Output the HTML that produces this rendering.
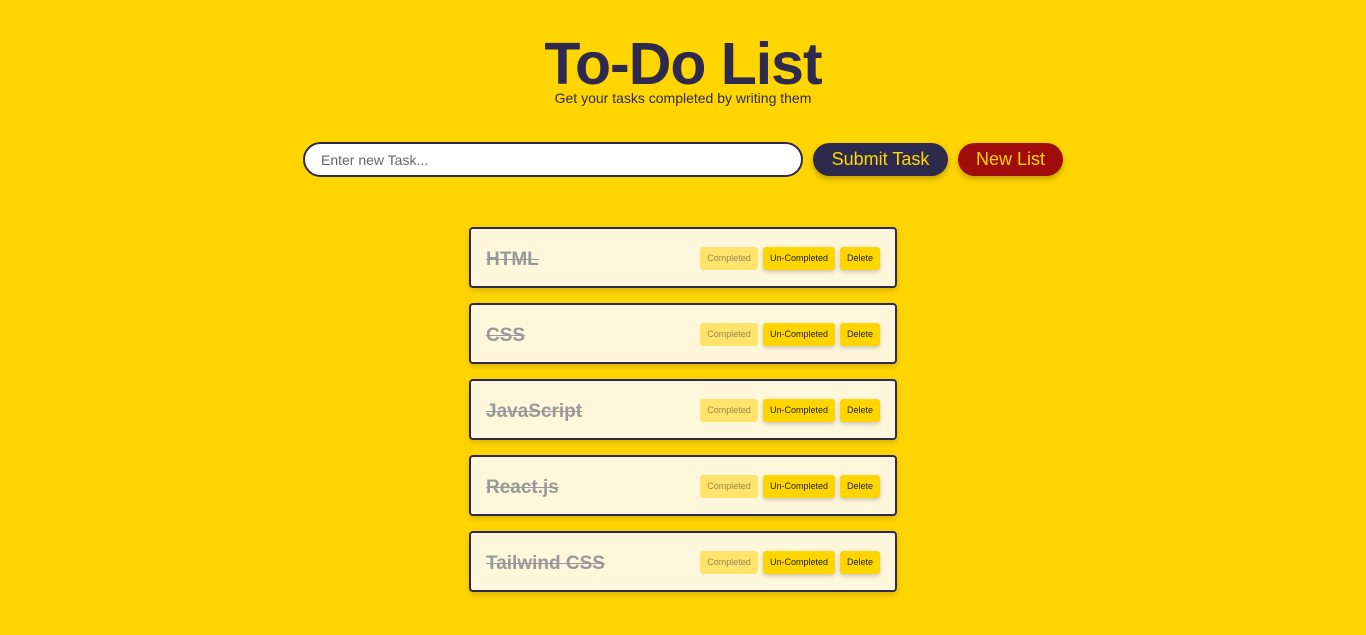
<!DOCTYPE html>
<html><head><meta charset="utf-8"><style>
body{margin:0;background:#ffd500;font-family:"Liberation Sans",sans-serif;width:1366px;height:635px;overflow:hidden;position:relative}
h1{position:absolute;left:0;width:1366px;top:29px;margin:0;text-align:center;font-size:59px;font-weight:bold;color:#2e2a4e;letter-spacing:-1px;line-height:70px}
.sub{position:absolute;left:0;width:1366px;top:90px;text-align:center;font-size:14px;color:#2e2a4e}
.inp{position:absolute;left:303px;top:142px;width:496px;height:31px;border:2px solid #2e2a4e;border-radius:18px;background:#fff;box-sizing:content-box}
.inp span{position:absolute;left:16px;top:8px;font-size:14px;color:#666}
.btn{position:absolute;top:143px;height:33px;border-radius:17px;color:#ffd500;font-size:18px;line-height:33px;text-align:center;box-shadow:0 3px 6px rgba(0,0,0,.25)}
.card{position:absolute;left:469px;width:424px;height:57px;border:2px solid #2e2a4e;border-radius:4px;background:#fff7dc;box-shadow:0 3px 6px rgba(0,0,0,.15)}
.card .t{position:absolute;left:15px;top:20px;font-size:19px;font-weight:bold;color:#999;text-decoration:line-through}
.b{position:absolute;top:18px;height:23px;line-height:23px;font-size:9px;text-align:center;border-radius:3px;background:#ffd500;color:#222;box-shadow:0 2px 4px rgba(0,0,0,.2)}
.b1{left:229px;width:58px;background:#ffe36b;color:#9a8a50;box-shadow:none}
.b2{left:292px;width:72px}
.b3{left:369px;width:40px}
</style></head><body>
<h1>To-Do List</h1>
<div class="sub">Get your tasks completed by writing them</div>
<div class="inp"><span>Enter new Task...</span></div>
<div class="btn" style="left:813px;width:135px;background:#2e2a4e">Submit Task</div>
<div class="btn" style="left:958px;width:105px;background:#a00c0c">New List</div>
<div class="card" style="top:227px"><span class="t">HTML</span><div class="b b1">Completed</div><div class="b b2">Un-Completed</div><div class="b b3">Delete</div></div>
<div class="card" style="top:303px"><span class="t">CSS</span><div class="b b1">Completed</div><div class="b b2">Un-Completed</div><div class="b b3">Delete</div></div>
<div class="card" style="top:379px"><span class="t">JavaScript</span><div class="b b1">Completed</div><div class="b b2">Un-Completed</div><div class="b b3">Delete</div></div>
<div class="card" style="top:455px"><span class="t">React.js</span><div class="b b1">Completed</div><div class="b b2">Un-Completed</div><div class="b b3">Delete</div></div>
<div class="card" style="top:531px"><span class="t">Tailwind CSS</span><div class="b b1">Completed</div><div class="b b2">Un-Completed</div><div class="b b3">Delete</div></div>
</body></html>
